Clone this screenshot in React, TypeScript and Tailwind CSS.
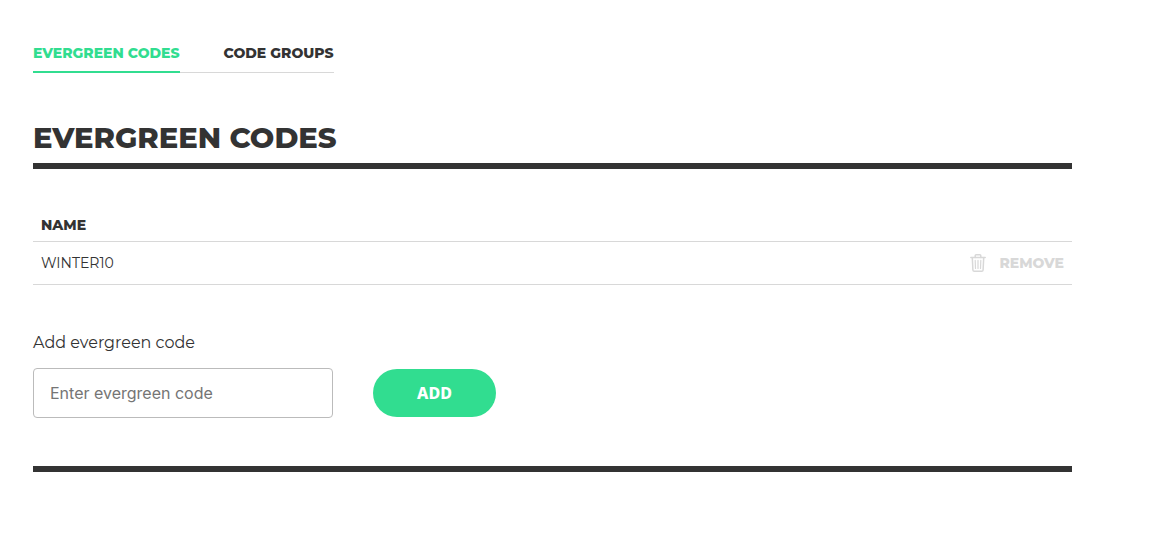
import { useState, type FormEvent } from "react";

function TrashIcon() {
  return (
    <svg
      className="h-[18px] w-4"
      viewBox="0 0 16 18"
      fill="none"
      stroke="currentColor"
      strokeWidth="1.5"
      strokeLinecap="round"
      strokeLinejoin="round"
      aria-hidden="true"
    >
      <path d="M0.8 3.5h14.4" />
      <path d="M5.2 3.4V1.7a0.9 0.9 0 0 1 0.9-0.9h3.8a0.9 0.9 0 0 1 0.9 0.9v1.7" />
      <path d="M2.3 3.8l0.6 12.2a1.3 1.3 0 0 0 1.3 1.2h7.6a1.3 1.3 0 0 0 1.3-1.2l0.6-12.2" />
      <path strokeWidth="1.2" d="M5.2 6.4l0.3 8M8 6.4v8M10.8 6.4l-0.3 8" />
    </svg>
  );
}

export default function App() {
  const [codes, setCodes] = useState(["WINTER10"]);
  const [value, setValue] = useState("");

  const handleAdd = (e: FormEvent) => {
    e.preventDefault();
    const code = value.trim();
    if (!code || codes.includes(code)) return;
    setCodes([...codes, code]);
    setValue("");
  };

  return (
    <main className="bg-white pt-[43px] pr-24 pb-20 pl-[33px] font-['Montserrat','Inter',sans-serif] text-[#333]">
      <nav className="flex w-fit text-sm leading-5 font-extrabold">
        <a
          href="#evergreen"
          aria-current="page"
          className="border-b-2 border-[#31dd90] pb-2 text-[#31dd90]"
        >
          EVERGREEN CODES
        </a>
        <a href="#groups" className="border-b border-[#d8d8d8] pb-[9px] pl-11">
          CODE GROUPS
        </a>
      </nav>

      <section className="mt-[46px] border-b-[6px] border-[#333] pb-12">
        <h1 className="border-b-[6px] border-[#333] pb-[6px] text-[29px] leading-[38px] font-extrabold">
          EVERGREEN CODES
        </h1>

        <table className="mt-10 w-full text-sm">
          <thead>
            <tr className="border-b border-[#d8d8d8]">
              <th scope="col" colSpan={2} className="h-8 px-2 text-left font-extrabold">
                NAME
              </th>
            </tr>
          </thead>
          <tbody>
            {codes.map((code) => (
              <tr key={code} className="border-b border-[#d8d8d8]">
                <td className="h-[43px] px-2">{code}</td>
                <td className="px-2">
                  <button
                    type="button"
                    onClick={() => setCodes(codes.filter((c) => c !== code))}
                    className="ml-auto flex items-center gap-[13px] font-extrabold text-[#d8d8d8]"
                  >
                    <TrashIcon />
                    REMOVE
                  </button>
                </td>
              </tr>
            ))}
          </tbody>
        </table>

        <form onSubmit={handleAdd} className="mt-[46px]">
          <label htmlFor="code" className="block text-base">
            Add evergreen code
          </label>
          <div className="mt-[13px] flex items-center gap-10">
            <input
              id="code"
              type="text"
              value={value}
              onChange={(e) => setValue(e.target.value)}
              placeholder="Enter evergreen code"
              className="h-[50px] w-[300px] rounded border border-[#bbb] px-4 font-['Inter',sans-serif] text-base placeholder:text-[#757575]"
            />
            <button
              type="submit"
              className="h-12 w-[123px] rounded-full bg-[#31dd90] font-['Noto_Sans',sans-serif] text-base font-extrabold text-white"
            >
              ADD
            </button>
          </div>
        </form>
      </section>
    </main>
  );
}
